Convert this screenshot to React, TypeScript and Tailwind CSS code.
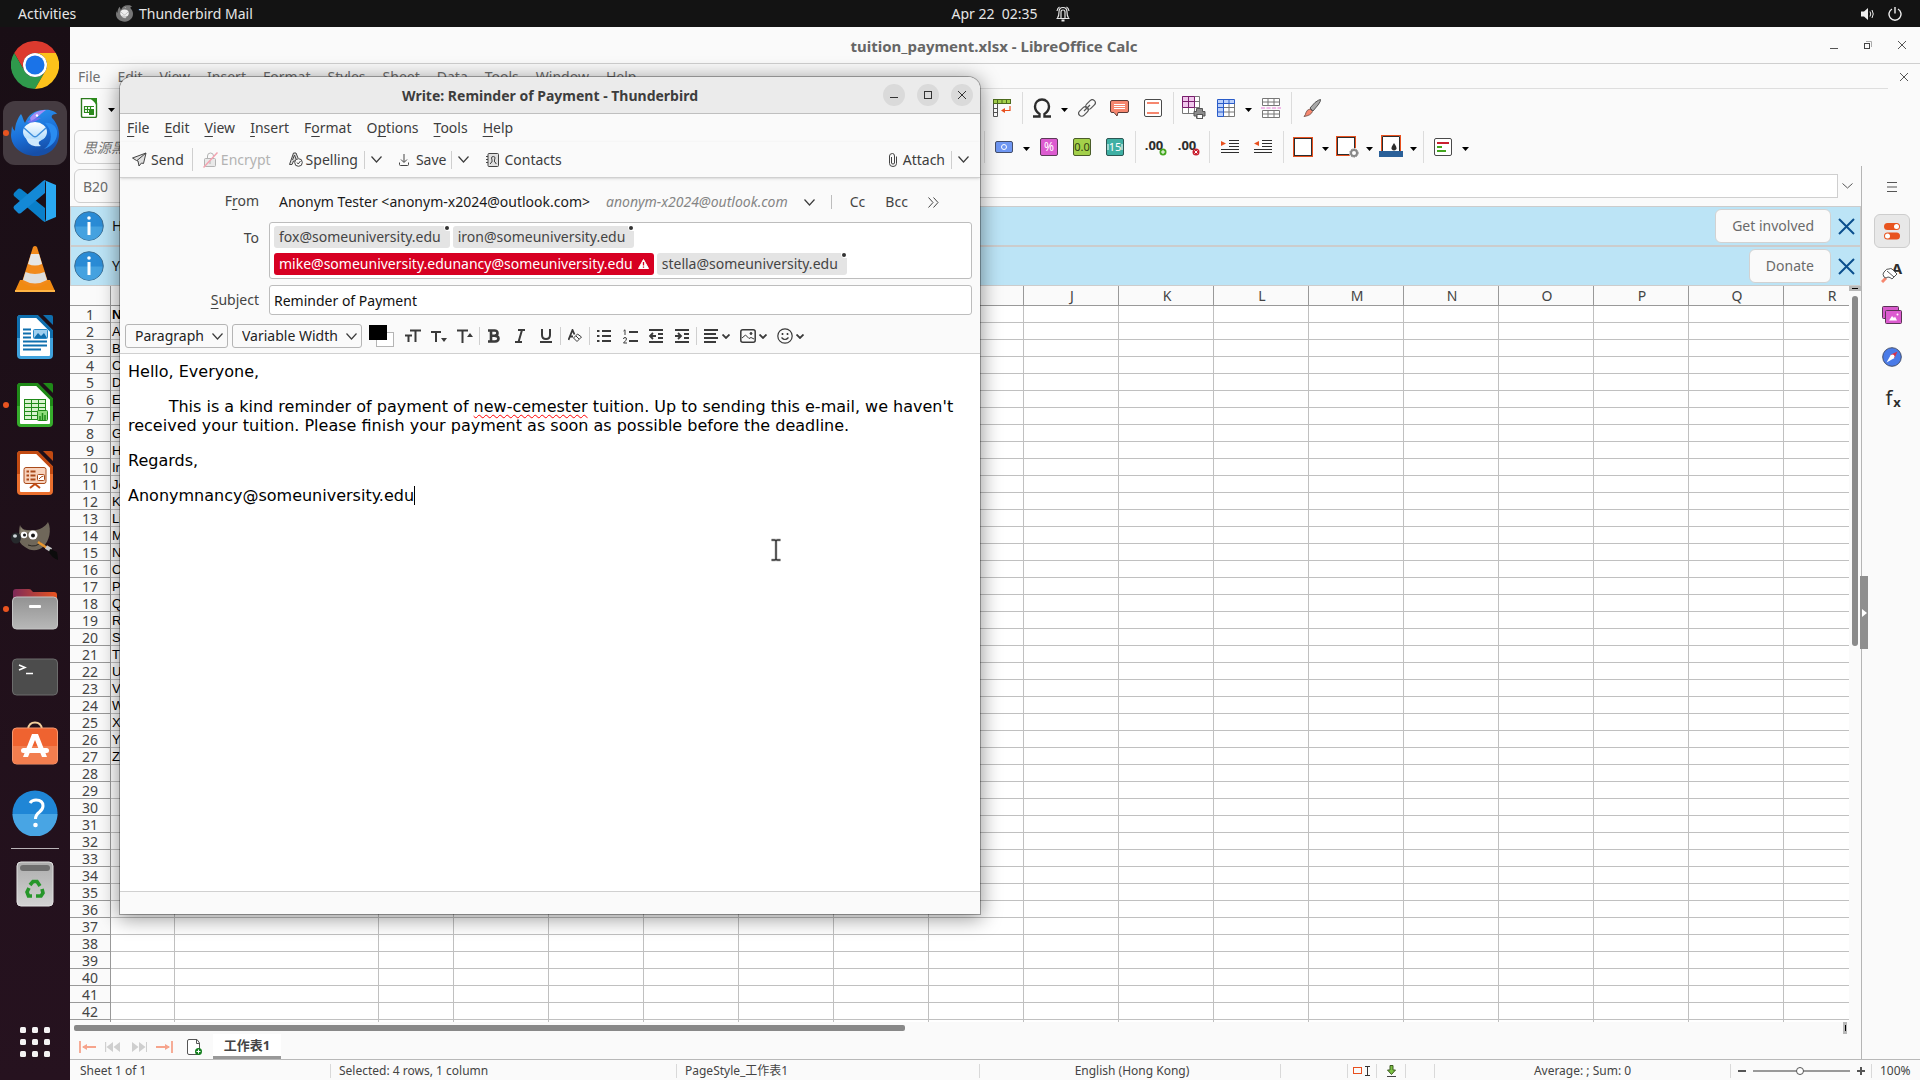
import React from "react";

/* ---------- dock icons ---------- */

function ChromeIcon() {
  return (
    <svg width="48" height="48" viewBox="0 0 48 48">
      <path d="M3.2 12A24 24 0 0 1 44.8 12L24 12A12 12 0 0 0 13.6 30Z" fill="#dc3a2e" />
      <path d="M3.2 12L13.6 30A12 12 0 0 0 34.4 30L24 48A24 24 0 0 1 3.2 12Z" fill="#2f9a4c" />
      <path d="M44.8 12A24 24 0 0 1 24 48L34.4 30A12 12 0 0 0 24 12Z" fill="#fcc21b" />
      <circle cx="24" cy="24" r="12" fill="#fff" />
      <circle cx="24" cy="24" r="9.5" fill="#1a73e8" />
    </svg>
  );
}

function ThunderbirdIcon({ size = 48, mono = false }: { size?: number; mono?: boolean }) {
  const body = mono ? "#777" : "url(#tbBody)";
  return (
    <svg width={size} height={size} viewBox="0 0 48 48">
      <defs>
        <linearGradient id="tbBody" x1="0" y1="0" x2="0.3" y2="1">
          <stop offset="0" stopColor="#2f9bf2" />
          <stop offset="0.6" stopColor="#1a6fd8" />
          <stop offset="1" stopColor="#164fa8" />
        </linearGradient>
        <linearGradient id="tbMail" x1="0" y1="0" x2="0" y2="1">
          <stop offset="0" stopColor="#ffffff" />
          <stop offset="1" stopColor="#a9d8fb" />
        </linearGradient>
      </defs>
      <path
        d="M1 17Q2 21 4 22C4 15 7 9 10 5C12 8 12 11 14 14C17 6 24 1 32 1C38 0 44 2 46 5C42 5 40 6 41 9C45 13 48 19 48 25C48 38 38 47 25 47C11 47 0 38 0 26Z"
        fill={body}
      />
      {!mono && (
        <>
          <path d="M16 13C20 9 26 8 30 9C26 11 22 15 16 13Z" fill="#6a6ff0" />
          <path d="M19 9C23 3 29 1 35 1C30 4 28 8 20 12Z" fill="#a58df5" />
          <path d="M34 14C42 22 42 34 33 40C42 37 47 30 46 22C45 17 40 13 34 14Z" fill="#2a8cf0" />
        </>
      )}
      <circle cx="26" cy="6.5" r="1.2" fill="#fff" />
      <ellipse cx="24" cy="23" rx="12" ry="10" fill={mono ? "#eee" : "url(#tbMail)"} />
      <path d="M15 29C17 36 22 38 30 37C27 35 27 33 30 31Z" fill={mono ? "#ccc" : "#cfe9fd"} />
      <path d="M13 19L22 27Q24 28.5 26 27L35 19" fill="none" stroke={mono ? "#999" : "#3f8fdc"} strokeWidth="1.5" />
    </svg>
  );
}

function CodeIcon() {
  return (
    <svg width="44" height="44" viewBox="0 0 44 44">
      <path d="M1 14L5 10Q6 9 8 10L32 29V43L30 42L1 17Q0 15.5 1 14Z" fill="#0a7fc9" />
      <path d="M1 30L5 34Q6 35 8 34L32 14V1L30 2L1 27Q0 28.5 1 30Z" fill="#1489d6" />
      <path d="M31 1L43 6V38L31 43Q33 42 33 40V4Q33 2 31 1Z" fill="#2aa9f2" />
    </svg>
  );
}

function ConeIcon() {
  return (
    <svg width="42" height="48" viewBox="0 0 42 48">
      <path d="M6 35H36L41 46H1Z" fill="#f08a12" />
      <path d="M1 45H41V47H1Z" fill="#ffb445" />
      <path d="M19 2Q21 0 23 2L34 37Q28 42 21 42Q14 42 8 37Z" fill="#f28a1c" />
      <path d="M17 9H25L28 19Q21 22 14 19Z" fill="#e6e6e6" />
      <path d="M11.5 27Q21 31 30.5 27L33 35Q21 42 9 35Z" fill="#dedede" />
    </svg>
  );
}

function DocIcon({ color, light, children }: { color: string; light: string; children: React.ReactNode }) {
  return (
    <svg width="38" height="46" viewBox="0 0 38 46">
      <path d="M4 2.5H21L35.5 17V41Q35.5 43.5 33 43.5H5Q2.5 43.5 2.5 41V5Q2.5 2.5 4 2.5Z" fill="#fff" stroke={light} strokeWidth="3" />
      <path d="M2.5 24V5Q2.5 2.5 5 2.5H21L35.5 17V24" fill="none" stroke={color} strokeWidth="3" />
      <path d="M27 1H35Q37 1 37 3V11Z" fill={color} />
      {children}
    </svg>
  );
}

function WriterIcon() {
  return (
    <DocIcon color="#0f6fae" light="#3fa2dd">
      <path d="M7 15.5H15M7 19.5H15M7 23.5H15M7 27.5H31M7 31.5H31M7 35.5H25" stroke="#0f6fae" strokeWidth="1.8" />
      <rect x="17.5" y="15.5" width="14" height="9" rx="1" fill="#9fd0f0" stroke="#2a8ac8" />
      <path d="M18 24L22 19L25 22L28 19L31 24Z" fill="#0f6fae" />
    </DocIcon>
  );
}

function CalcIcon() {
  return (
    <DocIcon color="#1f8a18" light="#36ad2c">
      <rect x="8.5" y="17.5" width="21" height="20" fill="#d8f3cf" stroke="#1f8a18" />
      <path d="M8 21.5H30M8 25.5H30M8 29.5H30M8 33.5H30M15.5 17V38M22.5 17V38" stroke="#1f8a18" />
      <rect x="21.5" y="28.5" width="10" height="10" rx="1" fill="#8fdc7a" stroke="#1f8a18" />
      <path d="M24 38V34M26.5 38V31M29 38V33" stroke="#1f8a18" strokeWidth="1.5" />
    </DocIcon>
  );
}

function ImpressIcon() {
  return (
    <DocIcon color="#c14a12" light="#ea6f2e">
      <rect x="8" y="17.5" width="22" height="16" rx="2" fill="#f8d3bd" stroke="#a94a1a" />
      <path d="M14 38L19 34L24 38" stroke="#c14a12" strokeWidth="2" fill="none" />
      <path d="M14.5 21.5H19.5M14.5 25.5H19.5M14.5 29.5H19.5M10.5 21.5H13M10.5 25.5H13M10.5 29.5H13" stroke="#a94a1a" strokeWidth="2" />
      <rect x="21.5" y="24.5" width="7" height="6" rx="1" fill="#fff" stroke="#a94a1a" />
      <path d="M23 29L25 27L27.5 26" stroke="#a94a1a" fill="none" />
    </DocIcon>
  );
}

function GimpIcon() {
  return (
    <svg width="48" height="40" viewBox="0 0 48 40">
      <path d="M9 4C11 9 14 9 20 9C28 10 34 6 37 1C41 9 38 20 33 25C27 31 19 30 14 26C9 23 8 20 8 16C8 11 8 8 9 4Z" fill="#6f675a" />
      <path d="M10 6C12 10 16 10 21 10C17 12 12 13 9 12Z" fill="#8b8372" />
      <ellipse cx="5" cy="17" rx="5" ry="5.5" fill="#26292c" />
      <ellipse cx="4" cy="15" rx="2" ry="1.8" fill="#cfd6da" />
      <circle cx="13" cy="14" r="3.2" fill="#fff" />
      <circle cx="22" cy="14" r="4.5" fill="#fff" />
      <circle cx="13.5" cy="14" r="1.5" fill="#1a1a1a" />
      <circle cx="22" cy="14.5" r="2" fill="#1a1a1a" />
      <path d="M17 24Q25 27 30 21" stroke="#2a2620" fill="none" />
      <path d="M27 21L36 27" stroke="#e8962e" strokeWidth="2.5" />
      <path d="M35 26L40 29" stroke="#c7c7c7" strokeWidth="4" />
      <path d="M39 28L46 31Q47 36 47 39Q40 36 38 31Z" fill="#0c0c0c" />
    </svg>
  );
}

function FilesIcon() {
  return (
    <svg width="46" height="42" viewBox="0 0 46 42">
      <defs>
        <linearGradient id="folderBack" x1="0" x2="1">
          <stop offset="0" stopColor="#7d2a58" />
          <stop offset="1" stopColor="#e95420" />
        </linearGradient>
        <linearGradient id="folderFront" x1="0" y1="0" x2="0" y2="1">
          <stop offset="0" stopColor="#929292" />
          <stop offset="1" stopColor="#b8b8b8" />
        </linearGradient>
      </defs>
      <path d="M1 20V4Q1 1 4 1H17Q19 1 20 3L21 4H42Q45 4 45 7V20Z" fill="url(#folderBack)" />
      <rect x="0.5" y="9" width="45" height="32" rx="4" fill="url(#folderFront)" stroke="#c4c4c4" />
      <rect x="17" y="17" width="12" height="3" rx="1" fill="#fff" />
    </svg>
  );
}

function TerminalIcon() {
  return (
    <svg width="46" height="38" viewBox="0 0 46 38">
      <rect x="0.5" y="1" width="45" height="36" rx="4" fill="#4c4c4c" stroke="#6c6c6c" />
      <path d="M7 7L13 9.5L7 12" stroke="#fff" strokeWidth="1.5" fill="none" />
      <path d="M14 15.5H21" stroke="#fff" strokeWidth="1.5" />
    </svg>
  );
}

function SoftwareIcon() {
  return (
    <svg width="46" height="48" viewBox="0 0 46 48">
      <path d="M16 10V8Q17 1.5 23 1.5T30 8V10" stroke="#f3cf9d" strokeWidth="1.8" fill="none" />
      <rect x="0.5" y="7" width="45" height="36" rx="4" fill="#ef6330" stroke="#f59a72" />
      <path d="M1 25H45V39Q45 42.5 42 42.5H4Q1 42.5 1 39Z" fill="#f27e4f" />
      <path d="M20 13H26L35 36H30L23 19L16 36H11Z" fill="#fff" />
      <rect x="9" y="27" width="28" height="5" rx="2.5" fill="#fff" />
    </svg>
  );
}

function HelpIcon() {
  return (
    <svg width="46" height="46" viewBox="0 0 46 46">
      <circle cx="23" cy="23" r="22.5" fill="#1f86d6" />
      <path d="M0.5 24A22.5 22.5 0 0 0 45.5 24Z" fill="#48a5e4" />
      <path d="M18 13Q20 10 24 10Q31 10 31 16Q31 19 27.5 22Q23.500 25 23.5 29" stroke="#fff" strokeWidth="3" fill="none" />
      <circle cx="23.5" cy="35" r="2.3" fill="#fff" />
    </svg>
  );
}

function TrashIcon() {
  return (
    <svg width="38" height="46" viewBox="0 0 38 46">
      <defs>
        <linearGradient id="trashBody" x1="0" y1="0" x2="0" y2="1">
          <stop offset="0" stopColor="#adadad" />
          <stop offset="1" stopColor="#d2d2d2" />
        </linearGradient>
      </defs>
      <rect x="1" y="1" width="36" height="44" rx="4" fill="url(#trashBody)" stroke="#e2e2e2" />
      <rect x="4" y="4" width="30" height="6" rx="3" fill="#6f6f6f" />
      <g fill="none" stroke="#26962a" strokeWidth="3.6">
        <path d="M14 24L17 20.5H21L24 25" />
        <path d="M26 28L27 32L25 35H20" />
        <path d="M16 35H12.5L11 31L13 27" />
      </g>
    </svg>
  );
}

const DOCK = [
  { name: "Google Chrome", icon: <ChromeIcon />, running: false, active: false },
  { name: "Thunderbird Mail", icon: <ThunderbirdIcon />, running: true, active: true },
  { name: "Visual Studio Code", icon: <CodeIcon />, running: false, active: false },
  { name: "VLC", icon: <ConeIcon />, running: false, active: false },
  { name: "LibreOffice Writer", icon: <WriterIcon />, running: false, active: false },
  { name: "LibreOffice Calc", icon: <CalcIcon />, running: true, active: false },
  { name: "LibreOffice Impress", icon: <ImpressIcon />, running: false, active: false },
  { name: "GIMP", icon: <GimpIcon />, running: false, active: false },
  { name: "Files", icon: <FilesIcon />, running: true, active: false },
  { name: "Terminal", icon: <TerminalIcon />, running: false, active: false },
  { name: "Software", icon: <SoftwareIcon />, running: false, active: false },
  { name: "Help", icon: <HelpIcon />, running: false, active: false },
];

function Dock() {
  return (
    <nav aria-label="Dock" className="flex w-[70px] shrink-0 flex-col items-center gap-1 bg-linear-to-b from-[#190e15] to-[#26121f] py-1.5">
      {DOCK.map((d) => (
        <button
          key={d.name}
          aria-label={d.name}
          className={
            d.active
              ? "relative flex size-16 items-center justify-center rounded-xl bg-[#453b41]"
              : "relative flex size-16 items-center justify-center"
          }
        >
          {d.icon}
          {d.running && <span className="absolute top-[29px] left-0 size-1.5 rounded-full bg-[#e95420]" />}
        </button>
      ))}
      <div className="-my-px h-px w-12 shrink-0 bg-[#b9b4b7]" />
      <button aria-label="Trash" className="flex size-16 items-center justify-center">
        <TrashIcon />
      </button>
      <button aria-label="Show Applications" className="mt-auto flex size-16 items-center justify-center">
        <svg width="30" height="30" viewBox="0 0 30 30" fill="#f4f2f3">
          {[0, 12, 24].map((y) => [0, 12, 24].map((x) => <rect key={x + "-" + y} x={x} y={y} width="6" height="6" rx="1.5" />))}
        </svg>
      </button>
    </nav>
  );
}

function TopBar() {
  return (
    <header className="grid h-[27px] shrink-0 grid-cols-3 items-center bg-[#131313] text-sm text-[#e6e6e6]">
      <div className="flex items-center">
        <button className="ml-[18px] w-[98px] text-left">Activities</button>
        <button className="flex items-center gap-1.5">
          <ThunderbirdIcon size={17} mono />
          Thunderbird Mail
        </button>
      </div>
      <div className="ml-[101px] flex items-center justify-center gap-[18px]">
        <button className="whitespace-pre">Apr 22  02:35</button>
        <svg width="14" height="18" viewBox="0 0 14 18" fill="none" stroke="#e6e6e6" strokeWidth="1.2">
          <path d="M0.5 13.5H13.5M1.500 13Q3 11 3 7Q3 2.500 7 2.500T11 7Q11 11 12.500 13M5 13V7Q5 5 7 5T9 7V13M3.500 2Q1.500 3 1 6M10.500 2Q12.500 3 13 6" />
          <path d="M5.5 15.5H8.5" strokeWidth="2" />
        </svg>
      </div>
      <div className="mr-[18px] flex items-center justify-end gap-3">
        <svg width="15" height="14" viewBox="0 0 15 14">
          <path d="M0 4.5H3L7 1V13L3 9.5H0Z" fill="#eee" />
          <path d="M9 4.5Q10.5 7 9 9.5M11 3Q13.500 7 11 11" stroke="#eee" fill="none" />
        </svg>
        <svg width="14" height="14" viewBox="0 0 14 14" fill="none" stroke="#eee" strokeWidth="1.4">
          <path d="M7 0V6.5M4 2A6 6 0 1 0 10 2" />
        </svg>
      </div>
    </header>
  );
}

/* ---------- Calc ---------- */

function Sep() {
  return (
    <span className="flex w-2 shrink-0 justify-center">
      <span className="h-8 w-px bg-[#dcdcdc]" />
    </span>
  );
}

function Tool({ label, children }: { label: string; children: React.ReactNode }) {
  return (
    <button aria-label={label} className="flex h-8 w-[33px] shrink-0 items-center justify-center">
      {children}
    </button>
  );
}

function MenuTool({ label, children }: { label: string; children: React.ReactNode }) {
  return (
    <button aria-label={label} className="flex h-8 w-11 shrink-0 items-center">
      <span className="flex w-8 items-center justify-center">{children}</span>
      <span className="flex w-3 justify-center pt-1">
        <svg width="7" height="4" viewBox="0 0 7 4">
          <path d="M0 0H7L3.5 4Z" fill="#000" />
        </svg>
      </span>
    </button>
  );
}

function SmallText({ x, y, size, fill, children, bold }: { x: number; y: number; size: number; fill: string; children: string; bold?: boolean }) {
  return (
    <text x={x} y={y} fontSize={size} fill={fill} fontWeight={bold ? 700 : 400} fontFamily="Noto Sans, sans-serif" textAnchor="middle">
      {children}
    </text>
  );
}

function StandardToolbar() {
  return (
    <div className="flex h-[38px] shrink-0 items-center" role="toolbar" aria-label="Standard">
      <div className="flex w-[915px] shrink-0 pl-[3px]">
        <MenuTool label="New spreadsheet">
          <svg width="18" height="20" viewBox="0 0 18 20">
            <path d="M1.5 0.5H12L16.5 5V18Q16.5 19.5 15 19.5H3Q1.5 19.5 1.5 18Z" fill="#fff" stroke="#2b7a1c" strokeWidth="1.4" />
            <path d="M9 0H17V9Q15 3 9 0Z" fill="#2b8a1c" />
            <path d="M4 8.5H14M4 11.5H14M4 14.5H14M4.500 8V15M7.5 8V15M10.5 8V15" stroke="#2b8a1c" strokeWidth="1.2" />
            <rect x="9" y="11" width="5" height="6" fill="#2b8a1c" />
          </svg>
        </MenuTool>
      </div>
      <Tool label="Pivot table">
        <svg width="18" height="18" viewBox="0 0 18 18">
          <rect x="0.5" y="0.5" width="17" height="4" fill="#a3d04a" stroke="#4d6b1e" />
          <path d="M4.5 0V5M9 0V5M13.5 0V5" stroke="#4d6b1e" />
          <path d="M0.5 5V17.5H4.5V5M0 9.5H5M0 13.5H5" fill="#fff" stroke="#555" />
          <path d="M17 7V11.5H10" stroke="#e8501e" strokeWidth="1.2" fill="none" />
          <path d="M8 11.5L12 9V14Z" fill="#e8501e" />
        </svg>
      </Tool>
      <Sep />
      <MenuTool label="Special character">
        <svg width="20" height="20" viewBox="0 0 20 20">
          <path d="M1 18.5H7.5V16C4.500 14 3 11.5 3 8.5C3 4.5 6 1.5 10 1.5S17 4.5 17 8.5C17 11.5 15.5 14 12.5 16V18.5H19" fill="none" stroke="#2d2d2d" strokeWidth="2.4" />
        </svg>
      </MenuTool>
      <Tool label="Insert hyperlink">
        <svg width="18" height="18" viewBox="0 0 18 18" fill="none" stroke="#555" strokeWidth="1.2">
          <rect x="7" y="2.5" width="11" height="6" rx="3" transform="rotate(-45 12.5 5.5)" />
          <rect x="0" y="9.5" width="11" height="6" rx="3" transform="rotate(-45 5.5 12.5)" />
          <path d="M6 12L12 6" />
        </svg>
      </Tool>
      <Tool label="Insert comment">
        <svg width="19" height="18" viewBox="0 0 19 18">
          <path d="M2 1.5H17Q18.5 1.5 18.5 3V12Q18.5 13.5 17 13.5H8L7 17L4 13.5H2Q0.5 13.5 0.5 12V3Q0.5 1.5 2 1.5Z" fill="#f6876f" stroke="#5a3a36" />
          <path d="M4 5.5H15M4 7.5H15M4 9.5H15" stroke="#fff" />
        </svg>
      </Tool>
      <Tool label="Headers and footers">
        <svg width="18" height="18" viewBox="0 0 18 18">
          <rect x="0.5" y="0.5" width="17" height="17" rx="1.5" fill="#fff" stroke="#4a4a4a" />
          <path d="M3 4H15M3 14H15" stroke="#f6876f" strokeWidth="2" />
        </svg>
      </Tool>
      <Sep />
      <Tool label="Print range">
        <svg width="24" height="24" viewBox="0 0 24 24">
          <path d="M0.5 0.5H17.5V17.5H0.5ZM0 5.5H18M0 11.5H18M6.5 0V18M12.5 0V18" fill="#fff" stroke="#777" />
          <path d="M0.5 0.5H12.5V11.5H0.5ZM0 5.5H13M6.5 0V12" fill="#f0c8ec" stroke="#7a1d6e" />
          <path d="M14.5 12.5H20.5V15.5H23V20H20.5V22H14.5V20H12V15.5H14.5Z" fill="#8d8d8d" stroke="#555" />
          <rect x="15" y="18.5" width="5.5" height="4" fill="#fff" stroke="#555" />
        </svg>
      </Tool>
      <MenuTool label="Freeze rows and columns">
        <svg width="18" height="18" viewBox="0 0 18 18">
          <rect x="0.5" y="0.5" width="17" height="17" fill="#fff" />
          <path d="M6 0.5H17.5V4.5H6Z" fill="#bcd1fb" />
          <path d="M0.5 0.5H6V17.5H0.5Z" fill="#bcd1fb" />
          <path d="M6.5 8.5H18M6.5 13H18M12 4.5V18M17.5 4V17.5H6" stroke="#777" fill="none" />
          <path d="M0.5 0.5H17.5V4.5H0.5M0.5 0.5V17.5H6.5V0.5M0 8.5H6M0 13H6M12 0V4" stroke="#2a5cc9" fill="none" />
        </svg>
      </MenuTool>
      <Tool label="Split window">
        <svg width="20" height="20" viewBox="0 0 20 20">
          <path d="M1.5 0.5H18.5V7.5H1.5ZM1 4H19M7 0V8M13 0V8M1.500 12.5H18.5V19.5H1.5ZM1 16H19M7 12V20M13 12V20" fill="#fff" stroke="#777" />
          <path d="M0 10H20" stroke="#e87ad8" strokeDasharray="4 1.5" />
        </svg>
      </Tool>
      <Sep />
      <Tool label="Show draw functions">
        <svg width="18" height="18" viewBox="0 0 18 18">
          <path d="M17.5 0.5Q18 2 15 6L10 12L7 9L12 3.5Q16 0.5 17.5 0.5Z" fill="#a8a8a8" stroke="#555" />
          <path d="M7 10L9.5 12.5Q8 16.5 1 17.5Q2.500 16 3 13.5Q4 10.5 7 10Z" fill="#f6876f" stroke="#6a4a42" strokeWidth="0.8" />
        </svg>
      </Tool>
    </div>
  );
}

function FormattingToolbar() {
  return (
    <div className="flex h-[39px] shrink-0 items-center" role="toolbar" aria-label="Formatting">
      <div className="flex w-[910px] shrink-0 pl-1">
        <input
          aria-label="Font name"
          defaultValue="思源黑体"
          className="h-[34px] w-60 rounded-md border border-[#cfcfcf] bg-[#fafafa] px-2 text-sm text-[#777] italic"
        />
      </div>
      <Sep />
      <MenuTool label="Currency">
        <svg width="18" height="12" viewBox="0 0 18 12">
          <rect x="0.5" y="0.5" width="17" height="11" rx="1.5" fill="#6f97f3" stroke="#454f6b" />
          <circle cx="9" cy="6" r="2.5" fill="none" stroke="#fff" />
        </svg>
      </MenuTool>
      <Tool label="Percent">
        <svg width="18" height="18" viewBox="0 0 18 18">
          <rect x="0.5" y="0.5" width="17" height="17" rx="1.5" fill="#dc5bd0" stroke="#5c3a58" />
          <SmallText x={9} y={13} size={12} fill="#fff">%</SmallText>
        </svg>
      </Tool>
      <Tool label="Number">
        <svg width="18" height="18" viewBox="0 0 18 18">
          <rect x="0.5" y="0.5" width="17" height="17" rx="1.5" fill="#a3d04a" stroke="#4a5c2a" />
          <SmallText x={9} y={13} size={11} fill="#2f3d12">0.0</SmallText>
        </svg>
      </Tool>
      <Tool label="Date">
        <svg width="18" height="18" viewBox="0 0 18 18">
          <rect x="0.5" y="0.5" width="17" height="17" rx="1.5" fill="#3fb0a4" stroke="#2c5753" />
          <SmallText x={9} y={13} size={11} fill="#fff">15</SmallText>
          <path d="M2 6V12M16 6V12" stroke="#fff" />
        </svg>
      </Tool>
      <Sep />
      <Tool label="Add decimal place">
        <svg width="23" height="18" viewBox="0 0 23 18">
          <SmallText x={10} y={12} size={13} fill="#2d2d2d" bold>.00</SmallText>
          <circle cx="19" cy="14" r="3.5" fill="#43a61f" />
          <path d="M17 14H21M19 12V16" stroke="#fff" />
        </svg>
      </Tool>
      <Tool label="Delete decimal place">
        <svg width="23" height="18" viewBox="0 0 23 18">
          <SmallText x={10} y={12} size={13} fill="#2d2d2d" bold>.00</SmallText>
          <circle cx="19" cy="14" r="3.5" fill="#c9202f" />
          <path d="M17.500 12.500L20.500 15.500M20.500 12.500L17.500 15.500" stroke="#fff" />
        </svg>
      </Tool>
      <Sep />
      <Tool label="Increase indent">
        <svg width="18" height="16" viewBox="0 0 18 16">
          <path d="M8 1.5H18M8 4.5H18M8 7.5H18M0 10.5H18M0 13.5H18" stroke="#2d2d2d" />
          <path d="M0 2L5 4.5L0 7Z" fill="#e8501e" />
        </svg>
      </Tool>
      <Tool label="Decrease indent">
        <svg width="18" height="16" viewBox="0 0 18 16">
          <path d="M8 1.5H18M8 4.5H18M8 7.5H18M0 10.5H18M0 13.5H18" stroke="#2d2d2d" />
          <path d="M5 2L0 4.5L5 7Z" fill="#e8501e" />
        </svg>
      </Tool>
      <Sep />
      <MenuTool label="Borders">
        <svg width="20" height="20" viewBox="0 0 20 20">
          <rect x="0.5" y="0.5" width="19" height="19" fill="#fff" stroke="#e8501e" />
          <rect x="1.5" y="1.5" width="17" height="17" fill="none" stroke="#2d2d2d" />
        </svg>
      </MenuTool>
      <MenuTool label="Border style">
        <svg width="23" height="23" viewBox="0 0 23 23">
          <rect x="0.5" y="1.5" width="19" height="19" fill="#fff" stroke="#e8501e" />
          <rect x="1.5" y="2.5" width="17" height="17" fill="none" stroke="#2d2d2d" />
          <circle cx="18" cy="18" r="5" fill="#fafafa" />
          <circle cx="18" cy="18" r="3" fill="#fff" stroke="#888" strokeWidth="2" />
          <circle cx="18" cy="18" r="4.2" fill="none" stroke="#888" strokeDasharray="1.5 1.2" />
        </svg>
      </MenuTool>
      <MenuTool label="Border color">
        <svg width="24" height="23" viewBox="0 0 24 23">
          <rect x="2.5" y="0.5" width="19" height="17" fill="#fff" stroke="#e8501e" />
          <path d="M3.5 16V1.5H20.5V16" fill="none" stroke="#2d2d2d" />
          <path d="M15 8Q18 12 17.5 14Q15 17 12.5 14Q12 12 15 8Z" fill="#2d2d2d" />
          <rect x="0" y="16" width="24" height="6" fill="#2a6099" />
        </svg>
      </MenuTool>
      <Sep />
      <MenuTool label="Conditional formatting">
        <svg width="18" height="18" viewBox="0 0 18 18">
          <rect x="0.5" y="0.5" width="17" height="17" rx="1.5" fill="#fff" stroke="#4a4a4a" />
          <path d="M3 5H15" stroke="#c9202f" strokeWidth="2" />
          <path d="M3 9H8M3 13H12" stroke="#43a61f" strokeWidth="2" />
        </svg>
      </MenuTool>
    </div>
  );
}

function InfoBar({ text, action }: { text: string; action: string }) {
  return (
    <div className="flex h-10 shrink-0 items-center border border-[#cccccc] bg-[#bce4f6] pr-[5px] pl-[3px]">
      <svg width="30" height="30" viewBox="0 0 30 30">
        <circle cx="15" cy="15" r="14.3" fill="#2a8bd5" stroke="#3f6f92" />
        <path d="M1.5 15.5A13.5 13.5 0 0 0 28.5 15.5Z" fill="#45a2e0" />
        <circle cx="15" cy="7" r="1.8" fill="#fff" />
        <path d="M15 11V24" stroke="#fff" strokeWidth="3" />
      </svg>
      <span className="ml-2 text-sm text-[#111]">{text}</span>
      <button className="ml-auto h-[34px] rounded-md border border-[#d2d2d2] bg-[#fafafa] px-4 text-sm text-[#6a6a6a]">{action}</button>
      <button aria-label="Close" className="ml-[7px]">
        <svg width="17" height="17" viewBox="0 0 17 17" stroke="#0b4f8e" strokeWidth="2">
          <path d="M1 1L16 16M16 1L1 16" />
        </svg>
      </button>
    </div>
  );
}

const NAMES = [
  "Name", "Alex", "Bella", "Cathy", "Daisy", "Elena", "Fox", "Grace", "Helen", "Iron", "Jeff", "Kevin", "Lily", "Mike",
  "Nancy", "Oscar", "Paul", "Quinn", "Rose", "Stella", "Thea", "Uma", "Victor", "Wendy", "Xavier", "Yuki", "Zoe",
];
const COLS = "ABCDEFGHIJKLMNOPQR".split("");
const WIDTHS = [64, 204, 75, 95, 95, 95, 95, 95, 95, 95, 95, 95, 95, 95, 95, 95, 95, 95];

function Sheet() {
  return (
    <div className="min-w-0 flex-1 overflow-hidden bg-white">
      <table className="w-[1808px] table-fixed border-separate border-spacing-0 text-sm leading-4">
        <colgroup>
          <col style={{ width: 41 }} />
          {WIDTHS.map((w, i) => (
            <col key={i} style={{ width: w }} />
          ))}
        </colgroup>
        <thead>
          <tr className="h-5 bg-[#fafafa] text-[#444]">
            <th className="border-r border-b border-[#999] p-0" />
            {COLS.map((c) => (
              <th key={c} className="border-r border-b border-[#999] p-0 pl-0.5 font-normal">
                {c}
              </th>
            ))}
          </tr>
        </thead>
        <tbody>
          {Array.from({ length: 43 }, (_, r) => (
            <tr key={r} className="h-[17px]">
              <th className="h-[17px] border-r border-b border-[#999] bg-[#fafafa] p-0 text-center leading-[18px] font-normal text-[#444]">
                <div className="h-4">{r + 1}</div>
              </th>
              {COLS.map((c, i) => (
                <td key={c} className="border-r border-b border-[#c0c0c0] p-0 pl-px font-['Liberation_Sans',sans-serif] text-[13px] leading-[17px]">
                  {i === 0 && r < NAMES.length ? (
                    <div className={r === 0 ? "h-4 font-bold" : "h-4"}>{NAMES[r]}</div>
                  ) : null}
                </td>
              ))}
            </tr>
          ))}
        </tbody>
      </table>
    </div>
  );
}

function SheetArea() {
  return (
    <div className="flex min-h-0 flex-1 flex-col">
      <div className="flex min-h-0 flex-1">
        <Sheet />
        <div className="flex w-3 shrink-0 flex-col items-center">
          <div className="flex h-[5px] w-full items-center justify-center bg-[#b8b8b8]">
            <span className="h-px w-1.5 bg-black" />
          </div>
          <div className="mt-[5px] h-[350px] w-1.5 rounded-full bg-[#8a8a8a]" />
        </div>
      </div>
      <div className="flex h-3 shrink-0 items-center pr-3.5 pl-1">
        <div className="h-1.5 w-[831px] rounded-xs bg-[#888]" />
        <div className="ml-auto flex h-full w-1 items-center justify-center bg-[#b8b8b8]">
          <span className="h-1.5 w-px bg-black" />
        </div>
      </div>
      <div className="flex h-[25px] shrink-0 items-center pl-[9px]">
        <button aria-label="First sheet" className="w-[26px]">
          <svg width="18" height="14" viewBox="0 0 18 14">
            <path d="M1 1V13M4 7H17" stroke="#f6a48c" strokeWidth="1.8" />
            <path d="M3 7L8 4V10Z" fill="#f6a48c" />
          </svg>
        </button>
        <button aria-label="Previous sheet" className="w-[26px]">
          <svg width="16" height="10" viewBox="0 0 16 10" fill="#cfcfcf">
            <path d="M0 0H1.2V10H0ZM8 0V10L1.5 5ZM15 0V10L8.5 5Z" />
          </svg>
        </button>
        <button aria-label="Next sheet" className="w-6">
          <svg width="16" height="10" viewBox="0 0 16 10" fill="#cfcfcf">
            <path d="M15 0H16V10H15ZM1 0V10L7.5 5ZM8 0V10L14.5 5Z" />
          </svg>
        </button>
        <button aria-label="Last sheet" className="w-8">
          <svg width="18" height="14" viewBox="0 0 18 14">
            <path d="M17 1V13M1 7H14" stroke="#f6a48c" strokeWidth="1.8" />
            <path d="M15 7L10 4V10Z" fill="#f6a48c" />
          </svg>
        </button>
        <button aria-label="Add sheet" className="w-[26px]">
          <svg width="16" height="16" viewBox="0 0 16 16">
            <path d="M10 0.5H2Q0.5 0.5 0.5 2V14Q0.5 15.5 2 15.5H12.5V4Z" fill="#fff" stroke="#555" />
            <path d="M9.5 0.5V4.5H13" fill="none" stroke="#555" />
            <circle cx="11.5" cy="12.5" r="3.5" fill="#15801f" />
            <path d="M9.5 12.5H13.5M11.5 10.5V14.5" stroke="#fff" />
          </svg>
        </button>
        <button className="h-[25px] w-[68px] border-b-3 border-[#999] bg-white text-[13px] leading-5 font-bold text-[#444]">工作表1</button>
      </div>
    </div>
  );
}

function SideBar() {
  return (
    <aside className="flex shrink-0 items-stretch">
      <div className="relative w-px bg-[#b5b5b5]">
        <button aria-label="Hide sidebar" className="absolute top-[410px] -left-px flex h-[73px] w-2 items-center justify-center bg-[#8f8f8f]">
          <svg width="5" height="8" viewBox="0 0 5 8">
            <path d="M0 0L5 4L0 8Z" fill="#fff" />
          </svg>
        </button>
      </div>
      <div className="flex w-[58px] flex-col items-center gap-2 pt-1 pl-0.5">
        <button aria-label="Sidebar settings" className="mb-0.5 flex h-[34px] w-9 items-center justify-center">
          <svg width="10" height="10" viewBox="0 0 10 10" stroke="#555">
            <path d="M0 0.5H10M0 5H10M0 9.5H10" />
          </svg>
        </button>
        <button aria-label="Properties" className="flex h-[34px] w-9 items-center justify-center rounded-md border border-[#cdcdcd] bg-[#e8e8e8]">
          <svg width="16" height="17" viewBox="0 0 16 17">
            <rect width="16" height="7" rx="3.5" fill="#e8541e" />
            <rect y="9.5" width="16" height="7" rx="3.5" fill="#e8541e" />
            <circle cx="12.5" cy="3.5" r="2.5" fill="#fff" />
            <circle cx="3.5" cy="13" r="2.5" fill="#fff" />
          </svg>
        </button>
        <button aria-label="Styles" className="flex h-[34px] w-9 items-center justify-center">
          <svg width="22" height="20" viewBox="0 0 22 20">
            <SmallText x={16} y={11} size={15} fill="#2d2d2d" bold>A</SmallText>
            <path d="M1 19L5 15" stroke="#f6876f" strokeWidth="3" />
            <path d="M3 14Q1 11 3 9Q6 5 8 6Q10 5 11 6L16 11L11 16Q9 14 7 14L5 15Z" fill="#fff" stroke="#555" />
            <path d="M6 8L13 14" stroke="#555" />
          </svg>
        </button>
        <button aria-label="Gallery" className="flex h-[34px] w-9 items-center justify-center">
          <svg width="20" height="18" viewBox="0 0 20 18">
            <rect x="0.5" y="0.5" width="16" height="12" rx="1" fill="#d75acb" stroke="#5a3455" />
            <rect x="3.5" y="4.5" width="16" height="13" rx="1" fill="#dc5bd0" stroke="#5a3455" />
            <path d="M7 14.5L10 10L12 12L13 10.5L15 14.5Z" fill="#fff" />
            <circle cx="15.5" cy="8.5" r="1" fill="#fff" />
          </svg>
        </button>
        <button aria-label="Navigator" className="flex h-[34px] w-9 items-center justify-center">
          <svg width="20" height="20" viewBox="0 0 20 20">
            <circle cx="10" cy="10" r="9.3" fill="#4a7be8" stroke="#44506e" />
            <path d="M4.5 15.5L9 7.5L12.5 11Z" fill="#fff" />
            <path d="M15.5 4.5L9 7.5L12.5 11Z" fill="#d8324a" />
            <circle cx="10.5" cy="9.5" r="2" fill="#fff" />
          </svg>
        </button>
        <button aria-label="Functions" className="flex h-[34px] w-9 items-center justify-center">
          <svg width="20" height="20" viewBox="0 0 20 20">
            <SmallText x={7} y={16} size={20} fill="#2d2d2d">f</SmallText>
            <SmallText x={15} y={18} size={13} fill="#2d2d2d" bold>x</SmallText>
          </svg>
        </button>
      </div>
    </aside>
  );
}

function StatusSep() {
  return <span className="h-3.5 w-px shrink-0 bg-[#d9d9d9]" />;
}

function StatusBar() {
  return (
    <footer className="flex h-[21px] shrink-0 items-center border-t border-[#b8b8b8] pt-0.5 text-xs text-[#444]">
      <span className="w-[260px] pl-2.5">Sheet 1 of 1</span>
      <StatusSep />
      <span className="w-[345px] pl-2">Selected: 4 rows, 1 column</span>
      <StatusSep />
      <span className="w-[302px] pl-2">PageStyle_工作表1</span>
      <StatusSep />
      <span className="w-[300px] pl-1 text-center">English (Hong Kong)</span>
      <StatusSep />
      <span className="w-[66px]" />
      <StatusSep />
      <span className="flex w-7 justify-center">
        <svg width="18" height="10" viewBox="0 0 18 10" fill="none">
          <rect x="0.5" y="1.5" width="8" height="6" stroke="#e8501e" />
          <path d="M12 0.5H17M14.5 0.5V9.5M12 9.5H17" stroke="#333" />
        </svg>
      </span>
      <StatusSep />
      <span className="flex w-7 justify-center">
        <svg width="9" height="12" viewBox="0 0 9 12">
          <path d="M3 0.5H6V5H8.5L4.5 9.5L0.5 5H3Z" fill="#7cc243" stroke="#3c5a22" />
          <path d="M0 11.5H9" stroke="#444" />
        </svg>
      </span>
      <StatusSep />
      <span className="w-7" />
      <StatusSep />
      <span className="flex-1 text-center">Average: ; Sum: 0</span>
      <StatusSep />
      <label className="flex w-[140px] items-center justify-center gap-[7px]">
        <svg width="8" height="8" viewBox="0 0 8 8" stroke="#555" strokeWidth="2">
          <path d="M0 4H8" />
        </svg>
        <input
          type="range"
          aria-label="Zoom"
          defaultValue={49}
          className="h-2.5 w-[97px] appearance-none bg-[linear-gradient(#999,#999)] bg-[length:100%_2px] bg-center bg-no-repeat [&::-webkit-slider-thumb]:size-2 [&::-webkit-slider-thumb]:appearance-none [&::-webkit-slider-thumb]:rounded-full [&::-webkit-slider-thumb]:border [&::-webkit-slider-thumb]:border-[#555] [&::-webkit-slider-thumb]:bg-white"
        />
        <svg width="8" height="8" viewBox="0 0 8 8" stroke="#555" strokeWidth="2">
          <path d="M0 4H8M4 0V8" />
        </svg>
      </label>
      <StatusSep />
      <span className="w-12 pl-2">100%</span>
    </footer>
  );
}

function CalcWindow() {
  return (
    <section aria-label="LibreOffice Calc" className="flex min-w-0 flex-1 flex-col bg-[#fafafa]">
      <div className="flex h-[37px] shrink-0 items-center border-b border-[#cfcfcf] pr-3.5">
        <h1 className="ml-[88px] flex-1 pt-0.5 text-center text-[15px] font-bold text-[#666]">tuition_payment.xlsx - LibreOffice Calc</h1>
        <div className="flex gap-[26px]">
          <button aria-label="Minimize">
            <svg width="8" height="8" viewBox="0 0 8 8">
              <path d="M0 7.5H8" stroke="#555" />
            </svg>
          </button>
          <button aria-label="Restore">
            <svg width="8" height="8" viewBox="0 0 8 8" fill="none">
              <path d="M2 0.5H7.5V6" stroke="#aaa" />
              <rect x="0.5" y="2.5" width="5" height="5" stroke="#444" />
            </svg>
          </button>
          <button aria-label="Close">
            <svg width="8" height="8" viewBox="0 0 8 8" stroke="#555">
              <path d="M0 0L8 8M8 0L0 8" />
            </svg>
          </button>
        </div>
      </div>
      <div className="flex h-[25px] shrink-0 items-center pr-3">
        <nav className="flex h-full flex-1 items-center gap-[17px] border-b border-[#dedede] pt-0.5 pl-2 text-sm text-[#6e6e6e]">
          {["File", "Edit", "View", "Insert", "Format", "Styles", "Sheet", "Data", "Tools", "Window", "Help"].map((m) => (
            <button key={m}>{m}</button>
          ))}
        </nav>
        <button aria-label="Close document" className="ml-3">
          <svg width="8" height="8" viewBox="0 0 8 8" stroke="#555">
            <path d="M0 0L8 8M8 0L0 8" />
          </svg>
        </button>
      </div>
      <StandardToolbar />
      <FormattingToolbar />
      <div className="flex min-h-0 flex-1">
        <div className="flex min-w-0 flex-1 flex-col">
          <div className="flex h-10 shrink-0 items-center gap-2 pr-2 pl-1">
            <input aria-label="Name box" defaultValue="B20" className="h-[34px] w-40 rounded-md border border-[#cfcfcf] bg-[#fafafa] px-2 text-sm text-[#6a6a6a]" />
            <input aria-label="Input line" className="h-6 min-w-0 flex-1 border border-[#cfcfcf] bg-white px-1 text-sm" />
            <button aria-label="Expand formula bar" className="-ml-1">
              <svg width="11" height="6" viewBox="0 0 11 6" fill="none" stroke="#555">
                <path d="M0.5 0.5L5.5 5L10.5 0.5" />
              </svg>
            </button>
          </div>
          <InfoBar text="Help us make LibreOffice even better!" action="Get involved" />
          <InfoBar text="Your donations support our worldwide community." action="Donate" />
          <SheetArea />
        </div>
        <SideBar />
      </div>
      <StatusBar />
    </section>
  );
}

/* ---------- Thunderbird compose window ---------- */

function Chevron({ bold = false }: { bold?: boolean }) {
  return bold ? (
    <svg width="8" height="5" viewBox="0 0 8 5" fill="none" stroke="#3a3a3a" strokeWidth="1.8">
      <path d="M0.5 0.5L4 4L7.5 0.5" />
    </svg>
  ) : (
    <svg width="11" height="7" viewBox="0 0 11 7" fill="none" stroke="#3d3d3d" strokeWidth="1.2">
      <path d="M0.5 0.5L5.5 6L10.5 0.5" />
    </svg>
  );
}

const TB_MENU = [
  ["", "F", "ile"],
  ["", "E", "dit"],
  ["", "V", "iew"],
  ["", "I", "nsert"],
  ["F", "o", "rmat"],
  ["O", "p", "tions"],
  ["", "T", "ools"],
  ["", "H", "elp"],
];

function Mnemonic({ parts }: { parts: string[] }) {
  return (
    <>
      {parts[0]}
      <span className="underline underline-offset-3">{parts[1]}</span>
      {parts[2]}
    </>
  );
}

function VLine() {
  return <span className="h-[18px] w-px shrink-0 bg-[#cfcfcf]" />;
}

function ComposeToolbar() {
  return (
    <div className="flex h-9 shrink-0 items-center border-b border-[#d0d0d0] pl-3 text-sm text-[#3d3d3d] shadow-sm" role="toolbar" aria-label="Compose">
      <button className="mr-2 flex items-center gap-1">
        <svg width="15" height="15" viewBox="0 0 15 15" fill="#e0e0e0" stroke="#444" strokeLinejoin="round">
          <path d="M14 1L0.5 6L4.5 8.5L6 9L7 14L9.5 11L11.5 11.5Z" />
          <path d="M14 1L5 8.5" fill="none" />
        </svg>
        Send
      </button>
      <span className="h-[23px] w-px bg-[#cfcfcf]" />
      <button disabled className="ml-2.5 flex items-center gap-[3px] text-[#b3b3b3]">
        <svg width="15" height="16" viewBox="0 0 15 16" fill="none" stroke="#b3b3b3">
          <rect x="1.5" y="6.5" width="11" height="8" rx="1" fill="#e9e9e9" />
          <path d="M4.5 6V4Q4.5 1 7.5 1T10.5 4M7 9V12" />
          <path d="M0.5 15.5L14.5 0.5" stroke="#f3a3b0" strokeWidth="1.5" />
        </svg>
        Encrypt
      </button>
      <button className="ml-[18px] flex items-center gap-[3px]">
        <svg width="14" height="15" viewBox="0 0 14 15" fill="none" stroke="#444">
          <path d="M0.5 12.5L4.5 1H7L9 6M0.5 12.5H3L4.5 9H6M3.500 8L5.5 3L7 7" fill="#ddd" />
          <circle cx="9.5" cy="10.5" r="3.8" fill="#fafafa" />
          <path d="M8 10.5L9.2 12L11.5 9" />
        </svg>
        Spelling
      </button>
      <div className="mr-[17px] ml-1.5 flex items-center gap-1.5">
        <VLine />
        <button aria-label="Spelling options"><Chevron /></button>
      </div>
      <button className="flex items-center gap-[7px]">
        <svg width="10" height="12" viewBox="0 0 10 12" fill="none" stroke="#444">
          <path d="M5 0V8M2 5.5L5 8.5L8 5.5M0.5 8.5V10.5Q0.5 11.5 1.5 11.5H8.5Q9.5 11.5 9.5 10.5V8.5" />
        </svg>
        Save
      </button>
      <div className="mr-[17px] ml-[5px] flex items-center gap-1.5">
        <VLine />
        <button aria-label="Save options"><Chevron /></button>
      </div>
      <button className="flex items-center gap-[5px]">
        <svg width="13" height="14" viewBox="0 0 13 14" fill="none" stroke="#444">
          <rect x="2" y="0.5" width="10.5" height="13" rx="1" fill="#e0e0e0" />
          <path d="M0 3.5H2M0 6.5H2M0 9.5H2M4.5 11V10L6 9V7L5.5 5Q5.5 3.5 7.3 3.5T9 5L8.5 7V9L10 10V11" />
        </svg>
        Contacts
      </button>
      <button className="mr-1.5 ml-auto flex items-center gap-1.5">
        <svg width="8" height="14" viewBox="0 0 8 14" fill="none" stroke="#444">
          <path d="M2.5 4V10Q2.5 11 4 11T5.5 10V3Q5.5 0.5 3.5 0.5Q0.5 0.5 0.5 3V10.5Q0.5 13.5 4 13.5T7.5 10.5V3.5" />
        </svg>
        Attach
      </button>
      <VLine />
      <button aria-label="Attach options" className="mr-[11px] ml-1.5"><Chevron /></button>
    </div>
  );
}

function Pill({ children }: { children: string }) {
  return (
    <span className="relative flex h-[22px] items-center rounded-[3px] bg-[#e4e4e4] pr-[9px] pl-[5px] text-[#444]">
      {children}
      <span className="absolute -top-px right-0 flex size-[6px] items-center justify-center rounded-bl-sm bg-white">
        <span className="size-1 rounded-full bg-[#333]" />
      </span>
    </span>
  );
}

function Fields() {
  return (
    <div className="grid shrink-0 grid-cols-[139px_1fr] gap-x-2.5 pr-2 text-sm text-[#444]">
      <label htmlFor="from" className="pt-[13px] text-right"><Mnemonic parts={["F", "r", "om"]} /></label>
      <div className="flex h-[44px] items-center pt-1 pl-2.5">
        <button id="from" aria-haspopup="listbox" className="flex items-center gap-4 text-[#1a1a1a]">
          Anonym Tester &lt;anonym-x2024@outlook.com&gt;
          <i className="text-[#858585]">anonym-x2024@outlook.com</i>
          <Chevron />
        </button>
        <span className="ml-4 h-3.5 w-px bg-[#bdbdbd]" />
        <button className="ml-[18px]">Cc</button>
        <button className="ml-5">Bcc</button>
        <button aria-label="More recipient fields" className="ml-5">
          <svg width="11" height="11" viewBox="0 0 11 11" fill="none" stroke="#444">
            <path d="M0.5 0.5L5 5.5L0.5 10.5M5.5 0.5L10 5.5L5.5 10.5" />
          </svg>
        </button>
      </div>
      <label htmlFor="to" className="pt-1.5 text-right">To</label>
      <div className="flex h-[57px] flex-wrap content-start items-center gap-x-[3px] gap-y-[5px] rounded-[3px] border border-[#bdbdbd] bg-white px-1 pt-[3px]">
        <Pill>fox@someuniversity.edu</Pill>
        <Pill>iron@someuniversity.edu</Pill>
        <span className="flex h-[22px] items-center gap-[5px] rounded-[3px] bg-[#d70022] px-[5px] text-white">
          mike@someuniversity.edunancy@someuniversity.edu
          <svg width="11" height="10" viewBox="0 0 11 10">
            <path d="M5.5 0.5L10.5 9.5H0.5Z" fill="#fff" stroke="#fff" strokeLinejoin="round" />
            <path d="M5.5 3V6.5M5.5 7.5V8.8" stroke="#d70022" strokeWidth="1.3" />
          </svg>
        </span>
        <Pill>stella@someuniversity.edu</Pill>
        <input id="to" className="w-8 min-w-0 flex-1 outline-none" />
      </div>
      <label htmlFor="subject" className="mt-[7px] pt-1 text-right"><Mnemonic parts={["", "S", "ubject"]} /></label>
      <input id="subject" defaultValue="Reminder of Payment" className="mt-[6px] h-[30px] rounded-[3px] border border-[#bdbdbd] bg-white px-1 text-[#111]" />
    </div>
  );
}

function Fmt({ label, children }: { label: string; children: React.ReactNode }) {
  return (
    <button aria-label={label} className="flex h-6 w-[26px] shrink-0 items-center justify-center">
      {children}
    </button>
  );
}

function FormatSep() {
  return <span className="mx-px h-[18px] w-px shrink-0 bg-[#cfcfcf]" />;
}

function FormatBar() {
  return (
    <div className="flex h-[39px] shrink-0 items-center border-b border-[#d0d0d0] pt-1 pl-[5px] text-sm text-[#222]" role="toolbar" aria-label="Formatting">
      <div className="relative flex items-center">
        <select aria-label="Paragraph format" className="h-6 w-[103px] appearance-none rounded-[3px] border border-[#b5b5b5] bg-[#fafafa] pl-[9px]">
          <option>Paragraph</option>
        </select>
        <span className="pointer-events-none absolute right-[5px]"><Chevron /></span>
      </div>
      <div className="relative ml-1 flex items-center">
        <select aria-label="Font" className="h-6 w-[130px] appearance-none rounded-[3px] border border-[#b5b5b5] bg-[#fafafa] pl-[9px]">
          <option>Variable Width</option>
        </select>
        <span className="pointer-events-none absolute right-[5px]"><Chevron /></span>
      </div>
      <button aria-label="Text color" className="mr-[5px] ml-[7px]">
        <svg width="26" height="22" viewBox="0 0 26 22">
          <rect x="7.5" y="7.5" width="17" height="14" fill="#fff" stroke="#b5b5b5" />
          <rect width="18" height="15" fill="#000" />
        </svg>
      </button>
      <Fmt label="Font size">
        <svg width="16" height="14" viewBox="0 0 16 14" stroke="#3a3a3a" strokeWidth="2" fill="none">
          <path d="M5 1.5H16M10.5 1V13M0 6.5H7M3.5 6V13" />
        </svg>
      </Fmt>
      <Fmt label="Smaller">
        <svg width="16" height="13" viewBox="0 0 16 13" fill="none">
          <path d="M0 2H10M5 2V12" stroke="#3a3a3a" strokeWidth="2" />
          <path d="M10 8H16L13 12Z" fill="#3a3a3a" />
        </svg>
      </Fmt>
      <Fmt label="Larger">
        <svg width="16" height="14" viewBox="0 0 16 14" fill="none">
          <path d="M0 1.5H11M5.5 1V14" stroke="#3a3a3a" strokeWidth="2" />
          <path d="M10 8H16L13 4Z" fill="#3a3a3a" />
        </svg>
      </Fmt>
      <FormatSep />
      <Fmt label="Bold">
        <svg width="12" height="14" viewBox="0 0 12 14" fill="none" stroke="#3a3a3a" strokeWidth="2.6">
          <path d="M0 1.5H6.5Q9.5 1.5 9.5 4T6.5 6.7H3M6.5 6.7Q10.5 6.7 10.5 9.5T7 12.5H0M3 1V13" />
        </svg>
      </Fmt>
      <Fmt label="Italic">
        <svg width="10" height="14" viewBox="0 0 10 14" stroke="#3a3a3a" strokeWidth="2" fill="none">
          <path d="M3 1H10M0 13H7M7 1L3.5 13" />
        </svg>
      </Fmt>
      <Fmt label="Underline">
        <svg width="12" height="14" viewBox="0 0 12 14" stroke="#3a3a3a" strokeWidth="2" fill="none">
          <path d="M2 0V6Q2 10 6 10T10 6V0M0 13H12" />
        </svg>
      </Fmt>
      <FormatSep />
      <Fmt label="Remove styling">
        <svg width="14" height="14" viewBox="0 0 14 14" fill="none" stroke="#3a3a3a">
          <path d="M0.5 11L4.5 1L6.5 5.5M2 7.5H5" strokeWidth="1.8" />
          <path d="M5.5 9L9.5 5L13.5 8L9 12.5ZM8 7L11 10" />
        </svg>
      </Fmt>
      <FormatSep />
      <Fmt label="Bulleted list">
        <svg width="14" height="14" viewBox="0 0 14 14" stroke="#3a3a3a" strokeWidth="1.8">
          <path d="M5 2H14M5 7H14M5 12H14M0 2H2.5M0 7H2.5M0 12H2.5" />
        </svg>
      </Fmt>
      <Fmt label="Numbered list">
        <svg width="15" height="15" viewBox="0 0 15 15" stroke="#3a3a3a" fill="none">
          <path d="M6 3H15M6 12H15" strokeWidth="1.8" />
          <path d="M0.5 2L2 0.8V6M0.5 10Q0.5 8.5 2 8.5T3.5 10Q3.5 11 0.5 14H4" />
        </svg>
      </Fmt>
      <Fmt label="Decrease indent">
        <svg width="14" height="14" viewBox="0 0 14 14" stroke="#3a3a3a" strokeWidth="1.8" fill="none">
          <path d="M0 1H14M9 5H14M9 9H14M0 13H14M1 7H7M4 4L1 7L4 10" />
        </svg>
      </Fmt>
      <Fmt label="Increase indent">
        <svg width="14" height="14" viewBox="0 0 14 14" stroke="#3a3a3a" strokeWidth="1.8" fill="none">
          <path d="M0 1H14M9 5H14M9 9H14M0 13H14M0 7H6M3 4L6 7L3 10" />
        </svg>
      </Fmt>
      <FormatSep />
      <button aria-label="Text alignment" className="ml-1.5 flex items-center gap-1">
        <svg width="14" height="14" viewBox="0 0 14 14" stroke="#3a3a3a" strokeWidth="1.8">
          <path d="M0 1H14M0 5H12M0 9H14M0 13H12" />
        </svg>
        <Chevron bold />
      </button>
      <button aria-label="Insert image" className="ml-2.5 flex items-center gap-[3px]">
        <svg width="16" height="14" viewBox="0 0 16 14" stroke="#3a3a3a" fill="none">
          <rect x="0.8" y="0.8" width="14.4" height="12.4" rx="2" strokeWidth="1.5" />
          <path d="M2 9L5.5 6L9 9.5L11 8.5L14 10" />
          <circle cx="11" cy="4.5" r="1" fill="#3a3a3a" />
        </svg>
        <Chevron bold />
      </button>
      <button aria-label="Insert smiley" className="ml-2.5 flex items-center gap-[3px]">
        <svg width="16" height="16" viewBox="0 0 16 16" stroke="#3a3a3a" fill="none" strokeWidth="1.2">
          <circle cx="8" cy="8" r="7.2" />
          <path d="M4.5 9.5Q8 13.5 11.5 9.5" />
          <path d="M5.5 5V7M10.5 5V7" strokeWidth="1.6" />
        </svg>
        <Chevron bold />
      </button>
    </div>
  );
}

function ComposeWindow() {
  return (
    <section
      aria-label="Write: Reminder of Payment"
      className="absolute top-[77px] left-[120px] flex h-[837px] w-[860px] flex-col overflow-hidden rounded-t-xl bg-[#fafafa] shadow-[0_0_0_1px_rgba(0,0,0,0.3),0_3px_20px_2px_rgba(0,0,0,0.4)]"
    >
      <div className="flex h-[37px] shrink-0 items-center border-b border-[#bfbfbf] bg-[#ebebeb] pr-[7px]">
        <h2 className="ml-[97px] flex-1 pt-0.5 text-center text-sm font-bold text-[#3d3d3d]">Write: Reminder of Payment - Thunderbird</h2>
        <div className="flex gap-3">
          <button aria-label="Minimize" className="flex size-[22px] items-center justify-center rounded-full bg-[#dadada]">
            <svg width="8" height="8" viewBox="0 0 8 8" stroke="#333"><path d="M0 6.5H8" /></svg>
          </button>
          <button aria-label="Maximize" className="flex size-[22px] items-center justify-center rounded-full bg-[#dadada]">
            <svg width="8" height="8" viewBox="0 0 8 8" stroke="#333" fill="none"><rect x="0.5" y="0.5" width="7" height="7" /></svg>
          </button>
          <button aria-label="Close" className="flex size-[22px] items-center justify-center rounded-full bg-[#dadada]">
            <svg width="8" height="8" viewBox="0 0 8 8" stroke="#333"><path d="M0 0L8 8M8 0L0 8" /></svg>
          </button>
        </div>
      </div>
      <nav className="flex h-7 shrink-0 items-center gap-[15px] pl-[7px] text-sm text-[#3d3d3d]">
        {TB_MENU.map((m) => (
          <button key={m.join("")}><Mnemonic parts={m} /></button>
        ))}
      </nav>
      <ComposeToolbar />
      <Fields />
      <FormatBar />
      <div
        role="textbox"
        aria-label="Message body"
        contentEditable
        suppressContentEditableWarning
        spellCheck={false}
        className="flex min-h-0 flex-1 flex-col gap-4 bg-white p-2 font-['DejaVu_Sans',sans-serif] text-base leading-[19px] text-black"
      >
        <p>Hello, Everyone,</p>
        <p>
          {"\u00a0".repeat(8)}This is a kind reminder of payment of{" "}
          <span className="underline decoration-[#f00] decoration-wavy decoration-1 underline-offset-2">new-cemester</span> tuition. Up to sending this
          e-mail, we haven't received your tuition. Please finish your payment as soon as possible before the deadline.
        </p>
        <p>Regards,</p>
        <p><span className="border-r border-black">Anonymnancy@someuniversity.edu</span></p>
      </div>
      <div className="h-[23px] shrink-0 border-t border-[#d0d0d0]" />
    </section>
  );
}

export default function App() {
  return (
    <div className="relative flex h-screen w-full flex-col overflow-hidden font-['Noto_Sans','Noto_Sans_CJK_SC',sans-serif]">
      <TopBar />
      <div className="flex min-h-0 flex-1">
        <Dock />
        <CalcWindow />
      </div>
      <ComposeWindow />
      <svg className="absolute top-[538px] left-[770px]" width="12" height="24" viewBox="0 0 12 24" fill="none">
        <path d="M1.5 2H4.5Q6 2 6 3.5Q6 2 7.5 2H10.5M6 3V21M1.5 22H4.5Q6 22 6 20.5Q6 22 7.5 22H10.5" stroke="#ccc" strokeWidth="3" />
        <path d="M1.5 2H4.5Q6 2 6 3.5Q6 2 7.5 2H10.5M6 3V21M1.5 22H4.5Q6 22 6 20.5Q6 22 7.5 22H10.5" stroke="#333" strokeWidth="1.5" />
      </svg>
    </div>
  );
}
